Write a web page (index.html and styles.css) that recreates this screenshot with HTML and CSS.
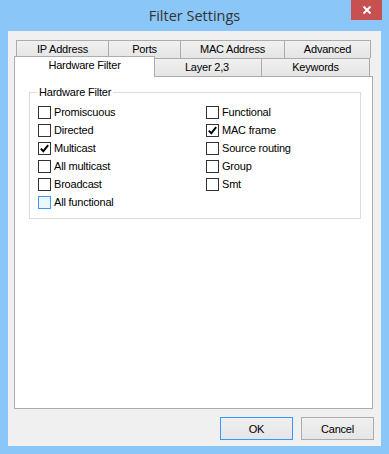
FILE: index.html
```html
<!DOCTYPE html>
<html lang="en">
<head>
    <meta charset="UTF-8">
    <meta name="viewport" content="width=device-width, initial-scale=1.0">
    <title>Filter Settings</title>
    <link rel="stylesheet" href="styles.css">
</head>
<body>
    <div class="window">
        <div class="titlebar">
            <div class="title">Filter Settings</div>
            <div class="close">
                <svg width="10" height="10" viewBox="0 0 10 10">
                    <path d="M1.5 1.5 L8.5 8.5 M8.5 1.5 L1.5 8.5" stroke="#fff" stroke-width="2"/>
                </svg>
            </div>
        </div>
        <div class="client">
            <div class="tabs">
                <div class="tab-row">
                    <div class="tab" style="width:93px">IP Address</div>
                    <div class="tab" style="width:73px">Ports</div>
                    <div class="tab" style="width:105px">MAC Address</div>
                    <div class="tab" style="width:87px">Advanced</div>
                </div>
                <div class="tab-row front">
                    <div class="tab active" style="width:141px">Hardware Filter</div>
                    <div class="tab" style="width:110px">Layer 2,3</div>
                    <div class="tab" style="width:109px">Keywords</div>
                </div>
            </div>
            <div class="panel">
                <div class="group">
                    <div class="group-title">Hardware Filter</div>
                    <div class="options">
                        <label class="option"><span class="box"></span>Promiscuous</label>
                        <label class="option"><span class="box"></span>Functional</label>
                        <label class="option"><span class="box"></span>Directed</label>
                        <label class="option"><span class="box checked"><svg width="11" height="11" viewBox="0 0 11 11"><path d="M1.8 5.6 L4.3 8.2 L9.2 2.2" fill="none" stroke="#000" stroke-width="1.9"/></svg></span>MAC frame</label>
                        <label class="option"><span class="box checked"><svg width="11" height="11" viewBox="0 0 11 11"><path d="M1.8 5.6 L4.3 8.2 L9.2 2.2" fill="none" stroke="#000" stroke-width="1.9"/></svg></span>Multicast</label>
                        <label class="option"><span class="box"></span>Source routing</label>
                        <label class="option"><span class="box"></span>All multicast</label>
                        <label class="option"><span class="box"></span>Group</label>
                        <label class="option"><span class="box"></span>Broadcast</label>
                        <label class="option"><span class="box"></span>Smt</label>
                        <label class="option"><span class="box hover"></span>All functional</label>
                    </div>
                </div>
            </div>
            <div class="buttons">
                <button class="button default">OK</button>
                <button class="button">Cancel</button>
            </div>
        </div>
    </div>
</body>
</html>
```

FILE: styles.css
```css
body {
    margin: 0;
    background-color: #8ac6f8;
    font-family: "Liberation Sans", Arial, sans-serif;
    font-size: 11px;
    letter-spacing: -0.2px;
    color: #000;
}
.window {
    width: 389px;
    height: 454px;
    background-color: #8ac6f8;
    box-sizing: border-box;
}
.titlebar {
    height: 31px;
    display: grid;
    grid-template-columns: 1fr auto 1fr;
}
.title {
    grid-column: 2;
    align-self: center;
    font-family: "Open Sans", "Noto Sans", sans-serif;
    font-size: 14.5px;
    letter-spacing: 0;
    color: #333;
    margin-top: -1px;
}
.close {
    grid-column: 3;
    justify-self: end;
    width: 31px;
    height: 20px;
    margin-right: 7px;
    background-color: #c75050;
    display: flex;
    justify-content: center;
    align-items: center;
}
.client {
    margin: 0 8px;
    height: 415px;
    background-color: #f0f0f0;
    padding: 9px 8px 0 6px;
    box-sizing: border-box;
}

/* Tabs */
.tabs {
    height: 36px;
}
.tab-row {
    display: flex;
    height: 18px;
    padding-left: 2px;
}
.tab {
    height: 18px;
    box-sizing: border-box;
    border: 1px solid #acacac;
    border-bottom: none;
    margin-left: -1px;
    background: linear-gradient(#f0f0f0, #e5e5e5);
    text-align: center;
    line-height: 17px;
}
.tab:first-child {
    margin-left: 0;
}
.tab.active {
    position: relative;
    z-index: 1;
    height: 21px;
    margin: -2px -2px 0 -2px;
    background: #fff;
    line-height: 17px;
}
.tab.active + .tab {
    margin-left: -1px;
}
.panel {
    height: 333px;
    background-color: #fff;
    border: 1px solid #acacac;
    box-sizing: border-box;
    padding-top: 15px;
}

/* Group box */
.group {
    margin: 0 11px 0 14px;
    border: 1px solid #dcdcdc;
    padding: 0 0 7px 8px;
}
.group-title {
    width: fit-content;
    margin: -7px 0 4px -1px;
    padding: 0 2px;
    line-height: 13px;
    background: #fff;
}
.options {
    display: grid;
    grid-template-columns: 168px 1fr;
}
.option {
    display: flex;
    align-items: center;
    height: 18px;
}
.box {
    width: 13px;
    height: 13px;
    box-sizing: border-box;
    border: 1px solid #333;
    background: #fff;
    margin-right: 3px;
    display: flex;
    justify-content: center;
    align-items: center;
}
.box.hover {
    border-color: #3c99f0;
    background: #edf5fd;
}

/* Buttons */
.buttons {
    display: flex;
    justify-content: flex-end;
    gap: 8px;
    margin: 8px -1px 0 0;
}
.button {
    width: 73px;
    height: 23px;
    border: 1px solid #acacac;
    background: linear-gradient(#f0f0f0, #e5e5e5);
    font-family: "Liberation Sans", Arial, sans-serif;
    font-size: 11px;
    letter-spacing: -0.2px;
    color: #000;
    padding: 0;
}
.button.default {
    border-color: #3399ff;
}
```
